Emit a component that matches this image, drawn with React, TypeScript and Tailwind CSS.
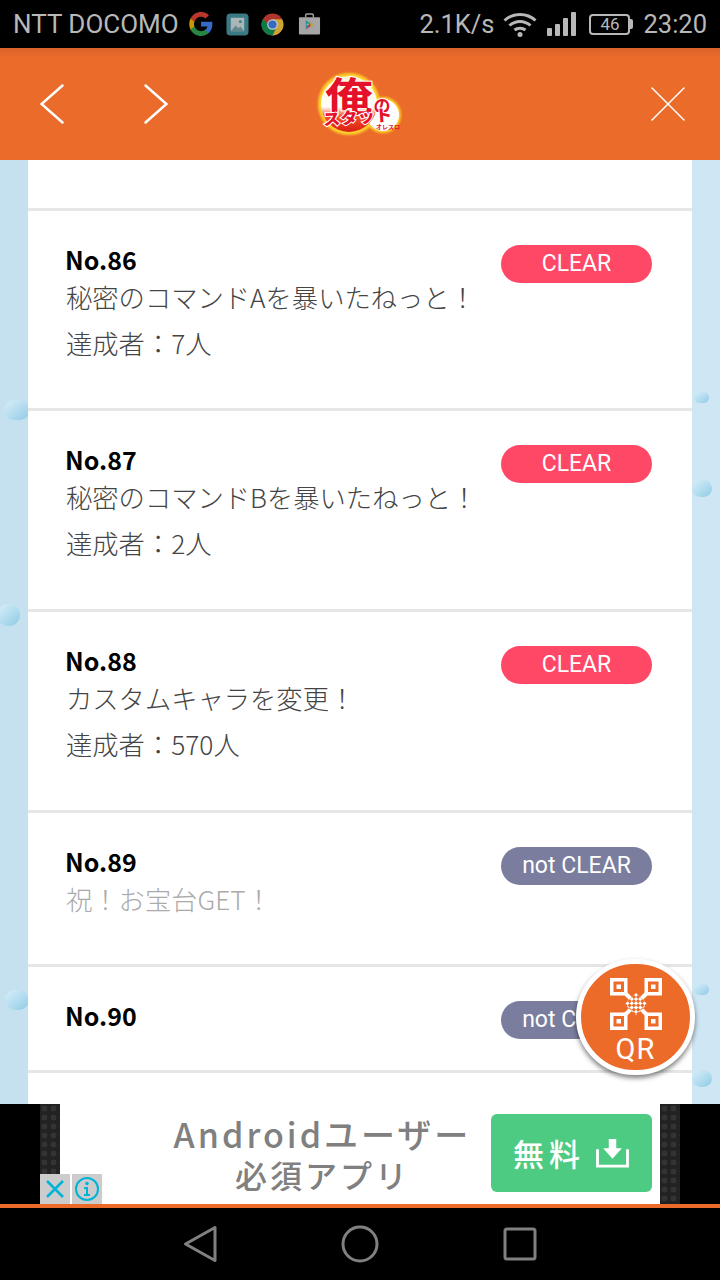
const jp = "font-['Noto_Sans_CJK_JP','Noto_Sans',sans-serif]";

type Row = {
  no: string;
  title?: string;
  count?: string;
  clear: boolean;
  height: string;
};

const rows: Row[] = [
  { no: "No.86", title: "秘密のコマンドAを暴いたねっと！", count: "達成者：7人", clear: true, height: "h-[200px]" },
  { no: "No.87", title: "秘密のコマンドBを暴いたねっと！", count: "達成者：2人", clear: true, height: "h-[201px]" },
  { no: "No.88", title: "カスタムキャラを変更！", count: "達成者：570人", clear: true, height: "h-[201px]" },
  { no: "No.89", title: "祝！お宝台GET！", clear: false, height: "h-[154px]" },
  { no: "No.90", clear: false, height: "h-[106px]" },
];

const bubbles = [
  "left-[4px] top-[240px] w-[26px] h-[20px]",
  "left-[-3px] top-[444px] w-[23px] h-[22px]",
  "left-[5px] top-[830px] w-[24px] h-[20px]",
  "left-[694px] top-[232px] w-[15px] h-[11px]",
  "left-[692px] top-[320px] w-[20px] h-[17px]",
  "left-[694px] top-[824px] w-[15px] h-[11px]",
  "left-[692px] top-[910px] w-[20px] h-[17px]",
];

function StatusIcons() {
  return (
    <div className="flex items-center ml-[9px] gap-[12px] opacity-80">
      <svg width="26" height="26" viewBox="0 0 48 48">
        <path fill="#4285F4" d="M45 24.5c0-1.6-.1-3.1-.4-4.5H24v8.500h11.800c-.5 2.7-2 5-4.400 6.600v5.500h7.100C42.700 36.700 45 31.100 45 24.500z" />
        <path fill="#34A853" d="M24 46c5.900 0 10.900-2 14.500-5.300l-7.100-5.500c-2 1.300-4.500 2.100-7.400 2.100-5.700 0-10.500-3.800-12.200-9H4.500v5.700C8.100 41.100 15.500 46 24 46z" />
        <path fill="#FBBC05" d="M11.800 28.300c-.9-2.700-.9-5.800 0-8.500v-5.700H4.500c-3 6-3 13.900 0 19.900l7.300-5.700z" />
        <path fill="#EA4335" d="M24 10.700c3.200 0 6.100 1.100 8.400 3.300l6.300-6.300C34.900 4.200 29.900 2 24 2 15.500 2 8.100 6.900 4.500 14.100l7.300 5.700c1.700-5.200 6.500-9.100 12.200-9.100z" />
      </svg>
      <svg width="23" height="23" viewBox="0 0 24 24">
        <rect width="23" height="23" x="0.5" y="0.5" rx="4" fill="#4a98a6" />
        <rect x="5" y="5" width="14" height="14" fill="#d5e4e6" />
        <path d="M5 19l5-6 3 3 2-2 4 5z" fill="#7fa9b0" />
        <circle cx="15" cy="9" r="1.5" fill="#4a98a6" />
      </svg>
      <svg width="23" height="23" viewBox="0 0 48 48">
        <circle cx="24" cy="24" r="23" fill="#DB4437" />
        <path d="M24 47l10-21-20-2-9.500-12A23 23 0 0 0 24 47z" fill="#0F9D58" />
        <path d="M24 13h20a23 23 0 0 1-20 34l10-21z" fill="#FFCD40" />
        <circle cx="24" cy="24" r="11" fill="#fff" />
        <circle cx="24" cy="24" r="8.5" fill="#4285F4" />
      </svg>
      <svg width="23" height="24" viewBox="0 0 24 24" className="ml-[2px]">
        <path d="M8 5V3a1.500 1.500 0 0 1 1.500-1.500h5A1.500 1.500 0 0 1 16 3v2" fill="none" stroke="#ccc" strokeWidth="1.5" />
        <rect x="1" y="5" width="22" height="18" rx="1" fill="#cfcfcf" />
        <path d="M8 8v5l4-2.500z" fill="#37b6d8" />
        <path d="M8 13v5l4-5z" fill="#37b6d8" />
        <path d="M8 8l7 4-3 1z" fill="#5fc272" />
        <path d="M8 18l7-5-3-1z" fill="#e94a4a" />
        <path d="M13 10.500l4 2.500-4 2z" fill="#f7c844" />
      </svg>
    </div>
  );
}

function StatusBar() {
  return (
    <div className="h-[48px] bg-black flex items-center justify-between pl-[13px] pr-[13px] text-[#b8b8b8] font-['Roboto',sans-serif]">
      <div className="flex items-center text-[26px]">
        <span>NTT DOCOMO</span>
        <StatusIcons />
      </div>
      <div className="flex items-center text-[25.5px]">
        <span>2.1K/s</span>
        <svg width="34" height="26" viewBox="0 0 34 26" className="ml-[9px]" fill="none" stroke="#b8b8b8" strokeWidth="3">
          <path d="M1.500 9.500C10 1.500 24 1.500 32.500 9.500" />
          <path d="M6.500 14.500c6-5.500 15-5.500 21 0" />
          <path d="M11.500 19c3-2.500 8-2.500 11 0" />
          <circle cx="17" cy="23.5" r="2.5" fill="#b8b8b8" stroke="none" />
        </svg>
        <div className="flex items-end gap-[3px] ml-[10px] h-[24px]">
          <div className="w-[5px] h-[8px] bg-[#b8b8b8] rounded-[1px]" />
          <div className="w-[5px] h-[12px] bg-[#b8b8b8] rounded-[1px]" />
          <div className="w-[5px] h-[18px] bg-[#b8b8b8] rounded-[1px]" />
          <div className="w-[5px] h-[24px] bg-[#b8b8b8] rounded-[1px]" />
        </div>
        <div className="flex items-center ml-[13px]">
          <div className="w-[41px] h-[21px] border-2 border-[#b8b8b8] rounded-[4px] flex items-center justify-center text-[17px] leading-none">
            46
          </div>
          <div className="w-[3px] h-[10px] bg-[#b8b8b8] rounded-r-[2px]" />
        </div>
        <span className="ml-[10px]">23:20</span>
      </div>
    </div>
  );
}

function Logo() {
  const font = "'Noto Sans CJK JP',sans-serif";
  return (
    <svg width="90" height="72" viewBox="0 0 90 72">
      <defs>
        <linearGradient id="logoBall" x1="0" y1="0" x2="0" y2="1">
          <stop offset="0" stopColor="#fff3c4" />
          <stop offset="0.55" stopColor="#ffffff" />
          <stop offset="0.72" stopColor="#f7512a" />
          <stop offset="1" stopColor="#d81e12" />
        </linearGradient>
        <filter id="logoBlur" x="-20%" y="-20%" width="140%" height="140%">
          <feGaussianBlur stdDeviation="1.2" />
        </filter>
      </defs>
      <g fill="#ffd02a" filter="url(#logoBlur)">
        <circle cx="33" cy="35" r="31" />
        <circle cx="67" cy="46" r="18" />
      </g>
      <circle cx="67" cy="46" r="16" fill="#fff" />
      <circle cx="33" cy="35" r="28" fill="url(#logoBall)" />
      <g fontFamily={font} fontWeight="700" fill="#e5102a" stroke="#fff" strokeWidth="2" style={{ paintOrder: "stroke" }}>
        <text x="0" y="0" textAnchor="middle" fontSize="40" transform="translate(33 42) scale(1.2 1)">俺</text>
        <text x="66" y="43" textAnchor="middle" fontSize="17">の</text>
        <text x="0" y="0" textAnchor="middle" fontSize="16" fontWeight="900" transform="translate(42 54) rotate(-4) scale(1.08 1)">スタット</text>
      </g>
      <text x="72" y="60" textAnchor="middle" fontSize="6" fontWeight="700" fill="#e5102a" fontFamily={font}>オレスロ</text>
    </svg>
  );
}

function Header() {
  return (
    <div className="h-[112px] relative flex items-center justify-between bg-gradient-to-b from-[#d9622a] via-[#ea6b2a] via-[8%] to-[#ea6b2a]">
      <div className="flex items-center pl-[40px] gap-[80px]">
        <svg width="24" height="40" viewBox="0 0 24 40" fill="none" stroke="#fff" strokeWidth="2.5" strokeLinecap="round">
          <path d="M22.500 1.500 1.500 20l21 18.500" />
        </svg>
        <svg width="24" height="40" viewBox="0 0 24 40" fill="none" stroke="#fff" strokeWidth="2.5" strokeLinecap="round">
          <path d="m1.500 1.500 21 18.500-21 18.500" />
        </svg>
      </div>
      <div className="absolute left-[316px] top-[21px]">
        <Logo />
      </div>
      <svg width="34" height="34" viewBox="0 0 34 34" className="mr-[35px]" fill="none" stroke="#fff" strokeWidth="1.5" strokeLinecap="round">
        <path d="M1 1l32 32M33 1 1 33" />
      </svg>
    </div>
  );
}

function Badge({ clear }: { clear: boolean }) {
  return (
    <div
      className={`w-[151px] h-[38px] mt-[4px] rounded-full flex items-center justify-center text-white text-[23px] font-['Roboto',sans-serif] ${
        clear ? "bg-[#ff4766]" : "bg-[#7a7d9e]"
      }`}
    >
      {clear ? "CLEAR" : "not CLEAR"}
    </div>
  );
}

function MissionRow({ row }: { row: Row }) {
  return (
    <div className={`${row.height} border-t-[3px] border-[#e6e6e6] flex justify-between pl-[38px] pr-[40px] pt-[30px]`}>
      <div className={jp}>
        <div className="text-[25px] leading-[36px] font-bold text-black -ml-[1px]">{row.no}</div>
        {row.title && (
          <div className={`text-[26.3px] leading-[40px] font-light ${row.clear ? "text-[#444]" : "text-[#aaa]"}`}>{row.title}</div>
        )}
        {row.count && <div className="text-[26.3px] leading-[40px] font-light mt-[6px] text-[#444]">{row.count}</div>}
      </div>
      <Badge clear={row.clear} />
    </div>
  );
}

function QrButton() {
  return (
    <div className="absolute left-[576px] top-[799px] w-[119px] h-[116px] rounded-full bg-[#ec6b29] border-[5px] border-white shadow-[0_3px_5px_rgba(0,0,0,0.5)] flex flex-col items-center pt-[14px]">
      <svg width="52" height="52" viewBox="0 0 52 52">
        <defs>
          <pattern id="qrCheck" width="6" height="6" patternUnits="userSpaceOnUse">
            <rect width="3" height="3" fill="#fff" />
            <rect x="3" y="3" width="3" height="3" fill="#fff" />
          </pattern>
        </defs>
        <path d="M12 12l28 28M40 12 12 40" stroke="#fff" strokeWidth="4" />
        <g fill="#ec6b29" stroke="#fff" strokeWidth="3.5">
          <rect x="1.750" y="1.750" width="14" height="14" />
          <rect x="36.250" y="1.750" width="14" height="14" />
          <rect x="1.750" y="36.250" width="14" height="14" />
          <rect x="36.250" y="36.250" width="14" height="14" />
        </g>
        <g fill="#fff">
          <rect x="6.500" y="6.500" width="4.500" height="4.500" />
          <rect x="41" y="6.500" width="4.500" height="4.500" />
          <rect x="6.500" y="41" width="4.500" height="4.500" />
          <rect x="41" y="41" width="4.500" height="4.500" />
        </g>
        <rect x="18" y="18" width="16" height="16" fill="#ec6b29" transform="rotate(45 26 26)" />
        <rect x="18" y="18" width="16" height="16" fill="url(#qrCheck)" transform="rotate(45 26 26)" />
      </svg>
      <span className="text-white text-[29px] leading-[28px] mt-[5px] tracking-[1px] font-['Roboto',sans-serif]">QR</span>
    </div>
  );
}

function AdBar() {
  const pattern = "bg-[#262626] bg-[radial-gradient(circle,#333333_45%,#222222_50%)] bg-[length:9px_9px]";
  return (
    <div className="h-[100px] bg-black flex relative pl-[40px] pr-[40px]">
      <div className={`w-[20px] ${pattern}`} />
      <div className="flex-1 bg-white flex items-center">
        <div className={`w-[431px] pl-[94px] text-center text-[#808080] font-medium whitespace-nowrap ${jp}`}>
          <div className="text-[34px] leading-[40px] tracking-[3px]">Androidユーザー</div>
          <div className="text-[32px] leading-[40px] tracking-[3px]">必須アプリ</div>
        </div>
        <div className="w-[161px] h-[78px] mb-[2px] bg-[#4ecb82] rounded-[6px] flex items-center pl-[22px] gap-[10px]">
          <span className={`text-white text-[31px] tracking-[5px] font-medium ${jp}`}>無料</span>
          <svg width="35" height="30" viewBox="0 0 36 32" fill="none">
            <path d="M2 12v18h32V12" stroke="#fff" strokeWidth="3" />
            <path d="M14 1h8v10h6L18 22 8 11h6z" fill="#fff" />
          </svg>
        </div>
      </div>
      <div className={`w-[20px] ${pattern}`} />
      <div className="absolute left-[40px] bottom-0 flex gap-[2px]">
        <div className="w-[30px] h-[30px] bg-[#ccc] flex items-center justify-center">
          <svg width="20" height="20" viewBox="0 0 20 20" fill="none" stroke="#00b4d8" strokeWidth="2.5">
            <path d="M2 2l16 16M18 2 2 18" />
          </svg>
        </div>
        <div className="w-[30px] h-[30px] bg-[#ccc] flex items-center justify-center">
          <svg width="26" height="26" viewBox="0 0 26 26" fill="none">
            <circle cx="13" cy="13" r="11" stroke="#00b4d8" strokeWidth="2" />
            <circle cx="13" cy="7.5" r="1.8" fill="#00b4d8" />
            <path d="M10 11h4v7h2v2h-6v-2h2v-5h-2z" fill="#00b4d8" />
          </svg>
        </div>
      </div>
    </div>
  );
}

function NavBar() {
  return (
    <div className="h-[76px] bg-black border-t-[4px] border-[#ea6b2a] flex items-center justify-center">
      <svg width="360" height="40" viewBox="0 0 360 40" fill="none" stroke="#808080" strokeWidth="3" strokeLinejoin="round">
        <path d="M35 3.500v33L5.500 20z" />
        <circle cx="180" cy="20" r="17" />
        <rect x="325" y="5" width="30" height="30" rx="2" />
      </svg>
    </div>
  );
}

export default function App() {
  return (
    <div className="w-[720px] h-[1280px] flex flex-col overflow-hidden bg-black">
      <StatusBar />
      <Header />
      <div className="h-[944px] relative overflow-hidden bg-gradient-to-r from-[#c5e1f0] to-[#cfe6f4]">
        {bubbles.map((b, i) => (
          <div key={i} className={`absolute rounded-full bg-gradient-to-br from-[#d9eff9] to-[#8fcbe6] ${b}`} />
        ))}
        <div className="mx-[28px] h-full bg-white relative">
          <div className="h-[48px]" />
          {rows.map((row) => (
            <MissionRow key={row.no} row={row} />
          ))}
          <div className="border-t-[3px] border-[#e6e6e6]" />
        </div>
        <QrButton />
      </div>
      <AdBar />
      <NavBar />
    </div>
  );
}
